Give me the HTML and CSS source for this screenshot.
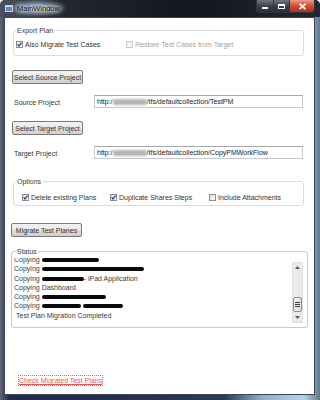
FILE: index.html
```html
<!DOCTYPE html>
<html lang="en">
<head>
  <meta charset="UTF-8">
  <title>MainWindow</title>
  <link rel="stylesheet" href="styles.css">
</head>
<body>
  <div class="window">
    <div class="titlebar">
      <span class="app-icon"></span>
      <span class="title">MainWindow</span>
      <div class="caption">
        <span class="cap min"><span class="min-bar"></span></span>
        <span class="cap max"><span class="max-box"></span></span>
        <span class="cap close">
          <svg width="9" height="7" viewBox="0 0 9 7"><path d="M1.5 0.8 L7.5 6.2 M7.5 0.8 L1.5 6.2" stroke="#fff" stroke-width="1.8"/></svg>
        </span>
      </div>
    </div>

    <div class="client">
      <fieldset class="group export">
        <legend>Export Plan</legend>
        <div class="checks">
          <label class="check w-also"><span class="box on"><svg width="5" height="5" viewBox="0 0 5 5"><path d="M0.6 2.4 L2 4 L4.5 0.6" stroke="#27358a" stroke-width="1.2" fill="none"/></svg></span>Also Migrate Test Cases</label>
          <label class="check disabled"><span class="box"></span>Restore Test Cases from Target</label>
        </div>
      </fieldset>

      <button class="btn">Select Source Project</button>
      <div class="field">
        <span class="field-label">Source Project</span>
        <div class="input">http:/<span class="blur"></span>/tfs/defaultcollection/TestPM</div>
      </div>

      <button class="btn btn-target">Select Target Project</button>
      <div class="field">
        <span class="field-label">Target Project</span>
        <div class="input">http:/<span class="blur"></span>/tfs/defaultcollection/CopyPMWorkFlow</div>
      </div>

      <fieldset class="group options">
        <legend>Options</legend>
        <div class="checks">
          <label class="check w-delete"><span class="box on"><svg width="5" height="5" viewBox="0 0 5 5"><path d="M0.6 2.4 L2 4 L4.5 0.6" stroke="#27358a" stroke-width="1.2" fill="none"/></svg></span>Delete existing Plans</label>
          <label class="check w-dup"><span class="box on"><svg width="5" height="5" viewBox="0 0 5 5"><path d="M0.6 2.4 L2 4 L4.5 0.6" stroke="#27358a" stroke-width="1.2" fill="none"/></svg></span>Duplicate Shares Steps</label>
          <label class="check"><span class="box"></span>Include Attachments</label>
        </div>
      </fieldset>

      <button class="btn btn-migrate">Migrate Test Planes</button>

      <fieldset class="group status">
        <legend>Status</legend>
        <div class="listbox">
          <div class="lines">
            <div class="line">Copying <span class="redact" style="width:57px"></span></div>
            <div class="line">Copying <span class="redact" style="width:102px"></span></div>
            <div class="line">Copying <span class="redact" style="width:42px"></span>- iPad Application</div>
            <div class="line">Copying Dashboard</div>
            <div class="line">Copying <span class="redact" style="width:64px"></span></div>
            <div class="line">Copying <span class="redact" style="width:39px"></span> <span class="redact" style="width:40px"></span></div>
            <div class="line done">Test Plan Migration Completed</div>
          </div>
          <div class="scrollbar">
            <span class="sb-btn"><svg width="5" height="3" viewBox="0 0 5 3"><path d="M0 3 L2.5 0 L5 3 Z" fill="#555"/></svg></span>
            <div class="sb-track"><span class="sb-thumb"><span class="grip"></span><span class="grip"></span><span class="grip"></span></span></div>
            <span class="sb-btn"><svg width="5" height="3" viewBox="0 0 5 3"><path d="M0 0 L5 0 L2.5 3 Z" fill="#555"/></svg></span>
          </div>
        </div>
      </fieldset>

      <a class="link" href="#">Check Migrated Test Plans</a>
    </div>
  </div>
</body>
</html>
```

FILE: styles.css
```css
* {
  margin: 0;
  padding: 0;
  box-sizing: border-box;
}

body {
  font-family: "Liberation Sans", Arial, sans-serif;
  font-size: 7px;
  color: #333;
  background: #fff;
  width: 320px;
  height: 400px;
  overflow: hidden;
}

.window {
  width: 320px;
  height: 400px;
  display: flex;
  flex-direction: column;
  border-radius: 5px 5px 0 0;
  background: linear-gradient(90deg, #5e6676 0%, #1e2a46 3%, #2a3858 70%, #8fb0c4 82%, #b7d3df 95%, #62798a 100%);
}

/* title bar */
.titlebar {
  height: 17px;
  display: flex;
  align-items: flex-start;
  border-radius: 5px 5px 0 0;
  background:
    radial-gradient(ellipse 30px 9px at 38px 8px, rgba(170, 200, 230, 0.9), rgba(170, 200, 230, 0) 100%),
    linear-gradient(90deg, #4a505c 0%, #23272f 20%, #12161e 60%, #23272f 100%);
}

.app-icon {
  width: 8px;
  height: 7px;
  margin: 5px 0 0 5px;
  border: 1px solid #c8d4e0;
  border-top-width: 2px;
  background: #5d88b8;
}

.title {
  margin: 4px 0 0 4px;
  font-size: 7.5px;
  line-height: 9px;
  color: #000;
  text-shadow: 0 0 3px #fff, 0 0 5px #fff, 0 0 7px #dde8f4;
}

.caption {
  margin-left: auto;
  margin-right: 5px;
  display: flex;
  height: 13px;
}

.cap {
  height: 13px;
  display: flex;
  align-items: center;
  justify-content: center;
  border: 1px solid #30343c;
  border-top: none;
}

.cap.min {
  width: 17px;
  border-radius: 0 0 0 4px;
  border-right: none;
  background: linear-gradient(#6f7684, #3c424e 50%, #2a2f38);
}

.cap.max {
  width: 16px;
  border-right: none;
  background: linear-gradient(#6f7684, #3c424e 50%, #2a2f38);
}

.cap.close {
  width: 26px;
  border-radius: 0 0 4px 0;
  background: linear-gradient(#e99a86, #cf4e33 50%, #a8301a);
}

.min-bar {
  width: 6px;
  height: 2px;
  margin-top: 4px;
  background: #fff;
}

.max-box {
  width: 7px;
  height: 5px;
  border: 1px solid #fff;
  border-top-width: 2px;
}

/* client area */
.client {
  flex: 1;
  margin: 0 5px 5px 4px;
  background: #fff;
  border: 1px solid #3b4454;
  padding-top: 8px;
}

.group {
  display: block;
  border: 1px solid #d5dfe5;
  border-radius: 3px;
  padding: 0;
  margin-left: 8px;
  width: 291px;
}

.group legend {
  margin-left: 2px;
  padding: 0 1px;
  line-height: 9px;
  color: #3a3a3a;
}

.checks {
  display: flex;
  align-items: center;
  height: 10px;
}

.export .checks {
  margin: 4px 0 6px;
  padding-left: 2px;
}

.options {
  margin-top: 18px;
}

.options .checks {
  margin: 6px 0 3px;
  padding-left: 8px;
}

.check {
  display: flex;
  align-items: center;
  gap: 2px;
  line-height: 9px;
}

.w-also {
  width: 110px;
}

.w-delete {
  width: 88px;
}

.w-dup {
  width: 99px;
}

.check.disabled {
  color: #a3a3a3;
}

.box {
  width: 7px;
  height: 7px;
  display: flex;
  align-items: center;
  justify-content: center;
  border: 1px solid #8f8f8f;
  background: linear-gradient(135deg, #d9dde2, #fbfbfb);
}

.disabled .box {
  border-color: #cacaca;
  background: #f4f4f4;
}

/* buttons */
.btn {
  display: block;
  width: 71px;
  height: 14px;
  margin: 14px 0 0 7px;
  border: 1px solid #7a7a7a;
  border-radius: 2px;
  font-family: inherit;
  font-size: 7px;
  color: #333;
  background: linear-gradient(#f2f2f2 0%, #ebebeb 45%, #dddddd 55%, #cfcfcf 100%);
}

.btn-target {
  margin-top: 13px;
}

.btn-migrate {
  margin: 17px 0 0 6px;
}

/* text fields */
.field {
  display: flex;
  align-items: center;
  margin: 11px 0 0 7px;
}

.field-label {
  width: 82px;
  padding: 2px 0 0 2px;
}

.input {
  width: 209px;
  height: 13px;
  line-height: 11px;
  padding-left: 2px;
  border: 1px solid #c4c7cc;
  border-top-color: #a3a6ab;
  color: #222;
  white-space: nowrap;
}

.blur {
  display: inline-block;
  width: 34px;
  height: 6px;
  vertical-align: -1px;
  border-radius: 2px;
  background: #b4b4b4;
  filter: blur(0.8px);
}

/* status */
.status {
  margin: 10px 0 0 6px;
  width: 297px;
  padding: 0 3px 1px 1px;
  border-color: #b6cde8;
}

.status legend {
  margin-left: 3px;
}

.listbox {
  display: flex;
  height: 68px;
  margin-top: 2px;
  overflow: hidden;
}

.lines {
  flex: 1;
  margin-top: -3px;
}

.line {
  height: 9.3px;
  line-height: 9.3px;
  padding-left: 1px;
  white-space: nowrap;
  color: #3a3a3a;
}

.line.done {
  padding-left: 3px;
}

.redact {
  display: inline-block;
  height: 4px;
  vertical-align: 0;
  border-radius: 2px;
  background: #0a0a0a;
}

.scrollbar {
  width: 11px;
  margin: 4px 1px 3px 0;
  display: flex;
  flex-direction: column;
  background: #eaeaea;
  border: 1px solid #e0e0e0;
}

.sb-btn {
  height: 9px;
  display: flex;
  align-items: center;
  justify-content: center;
}

.sb-track {
  flex: 1;
  display: flex;
  flex-direction: column;
  justify-content: flex-end;
  padding-bottom: 1px;
}

.sb-thumb {
  height: 15px;
  display: flex;
  flex-direction: column;
  align-items: center;
  justify-content: center;
  gap: 1px;
  border: 1px solid #8b8f96;
  border-radius: 2px;
  background: linear-gradient(90deg, #f4f4f4, #dcdcdc);
}

.grip {
  width: 5px;
  height: 1px;
  background: #3c3c3c;
}

/* link */
.link {
  display: inline-block;
  margin: 47px 0 0 13px;
  line-height: 9px;
  color: #f25454;
  border: 1px dotted #8a8a8a;
  text-decoration: underline;
}
```
